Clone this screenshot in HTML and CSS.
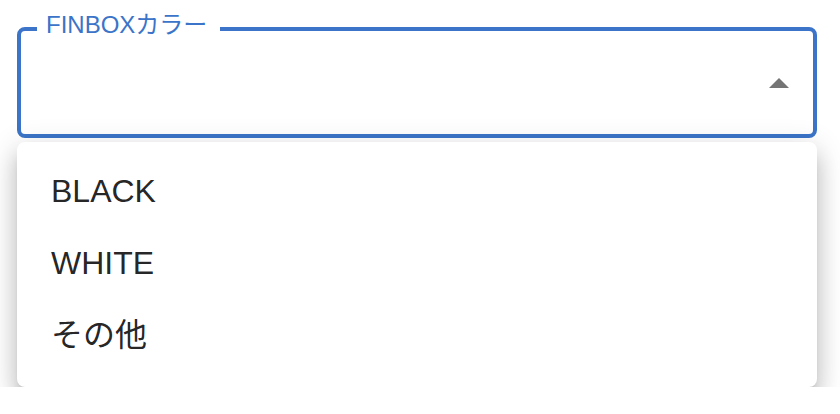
FILE: index.html
```html
<!DOCTYPE html>
<html lang="ja">
<head>
  <meta charset="UTF-8" />
  <meta name="viewport" content="width=device-width, initial-scale=1.0"/>
  <title>FINBOXカラー</title>
  <link rel="stylesheet" href="styles.css">
</head>
<body>
  <fieldset class="select-field">
    <legend class="select-label">FINBOXカラー</legend>
    <div class="select-body">
      <svg class="select-arrow" viewBox="0 0 24 24" aria-hidden="true">
        <path d="M7 14l5-5 5 5z"></path>
      </svg>
    </div>
  </fieldset>

  <ul class="menu">
    <li class="menu-item">BLACK</li>
    <li class="menu-item">WHITE</li>
    <li class="menu-item">その他</li>
  </ul>
</body>
</html>
```

FILE: styles.css
```css
* { box-sizing: border-box; margin: 0; padding: 0; }
body {
  font-family: 'Liberation Sans', Arial, 'Noto Sans CJK JP', sans-serif;
  background: #fff;
  color: rgba(0,0,0,0.87);
  padding-top: 12px;
}

.select-field {
  margin: 0 23px 0 17px;
  border: 4px solid #3b74c8;
  border-radius: 8px;
  padding: 0 10px 0 0;
}
.select-label {
  margin-left: 16px;
  padding: 0 13px 8px 9px;
  font-size: 24px;
  line-height: 26px;
  color: #3b74c8;
}
.select-body {
  height: 88px;
  display: flex;
  justify-content: flex-end;
  align-items: center;
}
.select-arrow {
  width: 48px;
  height: 48px;
  margin-bottom: 12px;
  fill: #757575;
}

.menu {
  list-style: none;
  margin: 4px 23px 0 17px;
  padding: 16px 0 13px;
  background: #fff;
  border-radius: 8px;
  box-shadow: 0 10px 10px -6px rgba(0,0,0,0.2),
              0 16px 20px 2px rgba(0,0,0,0.14),
              0 6px 28px 4px rgba(0,0,0,0.12);
  position: relative;
}
.menu-item {
  padding: 9px 32px 15px 34px;
  font-size: 32px;
  line-height: 48px;
}
```
